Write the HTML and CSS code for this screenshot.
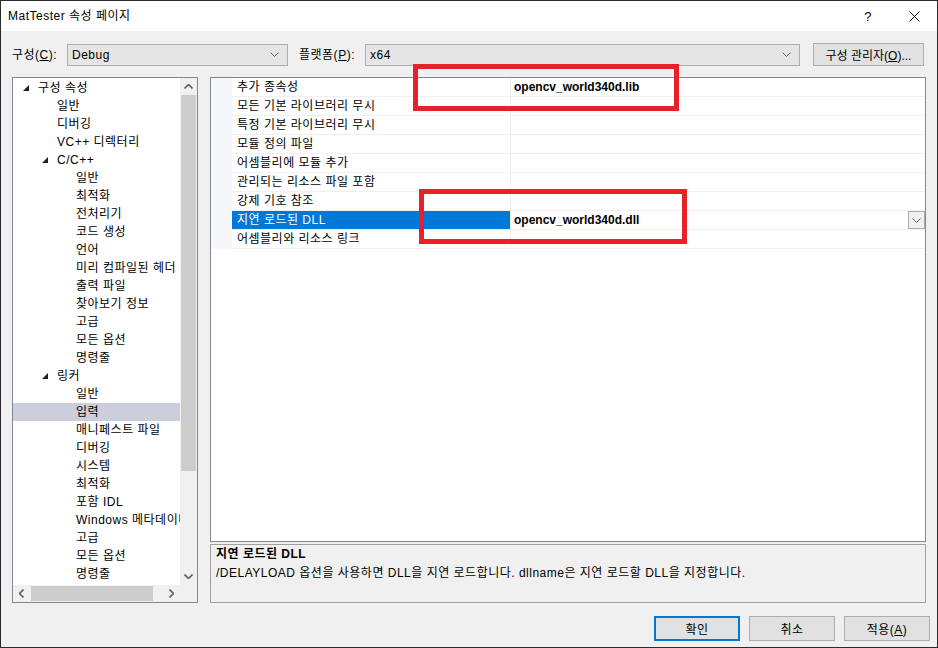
FILE: index.html
```html
<!DOCTYPE html>
<html lang="ko">
<head>
    <meta charset="UTF-8">
    <title>MatTester 속성 페이지</title>
    <link rel="stylesheet" href="styles.css">
</head>
<body>
    <div class="window">
        <div class="titlebar">
            <span class="title">MatTester 속성 페이지</span>
            <span class="tb-btn">?</span>
            <span class="tb-btn">
                <svg width="11" height="11" viewBox="0 0 11 11"><path d="M0.5 0.5 L10.5 10.5 M10.5 0.5 L0.5 10.5" stroke="#000" stroke-width="1" fill="none"/></svg>
            </span>
        </div>

        <div class="config">
            <span class="lbl lbl-config">구성(<u>C</u>):</span>
            <div class="combo combo-config">
                <span>Debug</span>
                <svg class="chev" width="9" height="5" viewBox="0 0 9 5"><path d="M0.5 0.5 L4.5 4.5 L8.5 0.5" stroke="#606060" fill="none"/></svg>
            </div>
            <span class="lbl lbl-plat">플랫폼(<u>P</u>):</span>
            <div class="combo combo-plat">
                <span>x64</span>
                <svg class="chev" width="9" height="5" viewBox="0 0 9 5"><path d="M0.5 0.5 L4.5 4.5 L8.5 0.5" stroke="#606060" fill="none"/></svg>
            </div>
            <button class="btn btn-mgr">구성 관리자(<u>O</u>)...</button>
        </div>

        <div class="main">
            <div class="tree">
                <div class="tree-view">
                    <div class="node l0"><span class="tw"><svg width="6" height="6" viewBox="0 0 6 6"><path d="M6 0 L6 6 L0 6 Z" fill="#1e1e1e"/></svg></span>구성 속성</div>
                    <div class="node l1"><span class="tw"></span>일반</div>
                    <div class="node l1"><span class="tw"></span>디버깅</div>
                    <div class="node l1"><span class="tw"></span>VC++ 디렉터리</div>
                    <div class="node l1"><span class="tw"><svg width="6" height="6" viewBox="0 0 6 6"><path d="M6 0 L6 6 L0 6 Z" fill="#1e1e1e"/></svg></span>C/C++</div>
                    <div class="node l2"><span class="tw"></span>일반</div>
                    <div class="node l2"><span class="tw"></span>최적화</div>
                    <div class="node l2"><span class="tw"></span>전처리기</div>
                    <div class="node l2"><span class="tw"></span>코드 생성</div>
                    <div class="node l2"><span class="tw"></span>언어</div>
                    <div class="node l2"><span class="tw"></span>미리 컴파일된 헤더</div>
                    <div class="node l2"><span class="tw"></span>출력 파일</div>
                    <div class="node l2"><span class="tw"></span>찾아보기 정보</div>
                    <div class="node l2"><span class="tw"></span>고급</div>
                    <div class="node l2"><span class="tw"></span>모든 옵션</div>
                    <div class="node l2"><span class="tw"></span>명령줄</div>
                    <div class="node l1"><span class="tw"><svg width="6" height="6" viewBox="0 0 6 6"><path d="M6 0 L6 6 L0 6 Z" fill="#1e1e1e"/></svg></span>링커</div>
                    <div class="node l2"><span class="tw"></span>일반</div>
                    <div class="node l2 selected"><span class="tw"></span>입력</div>
                    <div class="node l2"><span class="tw"></span>매니페스트 파일</div>
                    <div class="node l2"><span class="tw"></span>디버깅</div>
                    <div class="node l2"><span class="tw"></span>시스템</div>
                    <div class="node l2"><span class="tw"></span>최적화</div>
                    <div class="node l2"><span class="tw"></span>포함 IDL</div>
                    <div class="node l2"><span class="tw"></span>Windows 메타데이터</div>
                    <div class="node l2"><span class="tw"></span>고급</div>
                    <div class="node l2"><span class="tw"></span>모든 옵션</div>
                    <div class="node l2"><span class="tw"></span>명령줄</div>
                </div>
                <div class="vscroll">
                    <div class="arrow">
                        <svg width="9" height="5" viewBox="0 0 9 5"><path d="M0.5 4.5 L4.5 0.5 L8.5 4.5" stroke="#606060" stroke-width="1.6" fill="none"/></svg>
                    </div>
                    <div class="v-track"><div class="v-thumb"></div></div>
                    <div class="arrow">
                        <svg width="9" height="5" viewBox="0 0 9 5"><path d="M0.5 0.5 L4.5 4.5 L8.5 0.5" stroke="#606060" stroke-width="1.6" fill="none"/></svg>
                    </div>
                </div>
                <div class="hscroll">
                    <div class="arrow">
                        <svg width="5" height="9" viewBox="0 0 5 9"><path d="M4.5 0.5 L0.5 4.5 L4.5 8.5" stroke="#606060" stroke-width="1.6" fill="none"/></svg>
                    </div>
                    <div class="h-track"><div class="h-thumb"></div></div>
                    <div class="arrow">
                        <svg width="5" height="9" viewBox="0 0 5 9"><path d="M0.5 0.5 L4.5 4.5 L0.5 8.5" stroke="#606060" stroke-width="1.6" fill="none"/></svg>
                    </div>
                </div>
                <div class="corner"></div>
            </div>

            <div class="right">
                <div class="grid">
                    <div class="row"><span class="gutter"></span><span class="name">추가 종속성</span><span class="value">opencv_world340d.lib</span></div>
                    <div class="row"><span class="gutter"></span><span class="name">모든 기본 라이브러리 무시</span><span class="value"></span></div>
                    <div class="row"><span class="gutter"></span><span class="name">특정 기본 라이브러리 무시</span><span class="value"></span></div>
                    <div class="row"><span class="gutter"></span><span class="name">모듈 정의 파일</span><span class="value"></span></div>
                    <div class="row"><span class="gutter"></span><span class="name">어셈블리에 모듈 추가</span><span class="value"></span></div>
                    <div class="row"><span class="gutter"></span><span class="name">관리되는 리소스 파일 포함</span><span class="value"></span></div>
                    <div class="row"><span class="gutter"></span><span class="name">강제 기호 참조</span><span class="value"></span></div>
                    <div class="row active"><span class="gutter"></span><span class="name">지연 로드된 DLL</span><span class="value">opencv_world340d.dll<span class="drop"><svg width="9" height="5" viewBox="0 0 9 5"><path d="M0.5 0.5 L4.5 4.5 L8.5 0.5" stroke="#606060" fill="none"/></svg></span></span></div>
                    <div class="row"><span class="gutter"></span><span class="name">어셈블리와 리소스 링크</span><span class="value"></span></div>
                </div>
                <div class="desc">
                    <div class="desc-title">지연 로드된 DLL</div>
                    <div class="desc-text">/DELAYLOAD 옵션을 사용하면 DLL을 지연 로드합니다. dllname은 지연 로드할 DLL을 지정합니다.</div>
                </div>
            </div>
        </div>

        <div class="buttons">
            <button class="btn btn-ok">확인</button>
            <button class="btn">취소</button>
            <button class="btn">적용(<u>A</u>)</button>
        </div>

        <!-- annotation boxes drawn over the screenshot -->
        <div class="mark mark-lib"></div>
        <div class="mark mark-dll"></div>
    </div>
</body>
</html>
```

FILE: styles.css
```css
* {
    margin: 0;
    padding: 0;
    box-sizing: border-box;
}

body {
    font-family: "Liberation Sans", "Noto Sans CJK KR", sans-serif;
    font-size: 12px;
    letter-spacing: 0.5px;
    color: #000;
    background: #f0f0f0;
}

u {
    text-decoration: underline;
    text-underline-offset: 1px;
}

.window {
    position: relative;
    width: 938px;
    height: 648px;
    background: #f0f0f0;
    border: 1px solid #2b2b2b;
    display: flex;
    flex-direction: column;
}

/* title bar */
.titlebar {
    height: 30px;
    background: #fff;
    display: flex;
    align-items: center;
    padding-left: 7px;
}

.title {
    flex: 1;
    line-height: 16px;
}

.tb-btn {
    width: 46px;
    height: 30px;
    display: flex;
    align-items: center;
    justify-content: center;
    font-size: 13px;
}

/* configuration row */
.config {
    display: flex;
    align-items: center;
    height: 23px;
    margin-top: 12px;
    padding-left: 11px;
}

.lbl {
    line-height: 16px;
}

.lbl-config {
    width: 55px;
}

.lbl-plat {
    width: 66px;
    margin-left: 11px;
}

.combo {
    height: 22px;
    background: #e5e5e5;
    border: 1px solid #adadad;
    display: flex;
    align-items: center;
    justify-content: space-between;
    padding: 0 8px 0 4px;
}

.combo-config {
    width: 221px;
}

.combo-plat {
    width: 435px;
}

.btn {
    font-family: inherit;
    font-size: 12px;
    letter-spacing: 0.5px;
    color: #000;
    background: #e1e1e1;
    border: 1px solid #adadad;
    height: 25px;
    width: 86px;
}

.btn-mgr {
    width: 111px;
    height: 23px;
    margin-left: 13px;
    letter-spacing: 0;
}

.btn-ok {
    border-color: #0078d7;
    box-shadow: inset 0 0 0 1px #0078d7;
}

/* main area */
.main {
    display: flex;
    gap: 12px;
    height: 526px;
    margin-top: 11px;
    padding: 0 11px;
}

.tree {
    width: 186px;
    background: #fff;
    border: 1px solid #828790;
    display: grid;
    grid-template-columns: 1fr 17px;
    grid-template-rows: 1fr 17px;
    overflow: hidden;
}

.tree-view {
    overflow: hidden;
    padding-top: 1px;
}

.node {
    height: 18px;
    line-height: 18px;
    display: flex;
    align-items: center;
    white-space: nowrap;
}

.node .tw {
    width: 19px;
    flex: none;
    display: flex;
    align-items: center;
    padding-left: 4px;
}

.l0 { padding-left: 6px; }
.l1 { padding-left: 25px; }
.l2 { padding-left: 44px; }

.node.selected {
    background: #cccedb;
}

.vscroll {
    background: #f0f0f0;
    display: flex;
    flex-direction: column;
}

.vscroll .arrow {
    height: 17px;
    display: flex;
    align-items: center;
    justify-content: center;
}

.v-track {
    flex: 1;
    padding: 0 1px;
}

.v-thumb {
    height: 376px;
    background: #cdcdcd;
}

.hscroll {
    background: #f0f0f0;
    display: flex;
}

.hscroll .arrow {
    width: 17px;
    display: flex;
    align-items: center;
    justify-content: center;
}

.h-track {
    flex: 1;
    padding: 1px 0;
}

.h-thumb {
    width: 122px;
    height: 100%;
    margin-left: 1px;
    background: #cdcdcd;
}

.corner {
    background: #f0f0f0;
}

.right {
    flex: 1;
    display: flex;
    flex-direction: column;
    gap: 2px;
}

.grid {
    height: 465px;
    background: #fff;
    border: 1px solid #828790;
}

.row {
    display: flex;
    height: 19px;
    line-height: 18px;
}

.gutter {
    width: 21px;
    background: #f5f7fb;
}

.name {
    width: 278px;
    padding-left: 5px;
    border-bottom: 1px solid #f0f0f0;
    white-space: nowrap;
}

.value {
    flex: 1;
    position: relative;
    padding-left: 3px;
    font-weight: bold;
    letter-spacing: 0;
    border-left: 1px solid #f0f0f0;
    border-bottom: 1px solid #f0f0f0;
}

.row.active .name {
    background: #0078d7;
    color: #fff;
}

.drop {
    position: absolute;
    right: 0;
    top: 0;
    width: 17px;
    height: 18px;
    background: #f0f0f0;
    border: 1px solid #adadad;
    display: flex;
    align-items: center;
    justify-content: center;
}

.desc {
    height: 59px;
    border: 1px solid #a0a0a0;
    background: #f0f0f0;
    padding: 0 5px;
}

.desc-title {
    font-weight: bold;
    line-height: 19px;
}

.desc-text {
    line-height: 19px;
}

/* dialog buttons */
.buttons {
    display: flex;
    justify-content: flex-end;
    gap: 9px;
    margin-top: 13px;
    padding-right: 7px;
}

/* red annotation rectangles */
.mark {
    position: absolute;
    border: 5px solid #e8202a;
}

.mark-lib {
    left: 412px;
    top: 63px;
    width: 266px;
    height: 47px;
}

.mark-dll {
    left: 418px;
    top: 188px;
    width: 268px;
    height: 55px;
}
```
